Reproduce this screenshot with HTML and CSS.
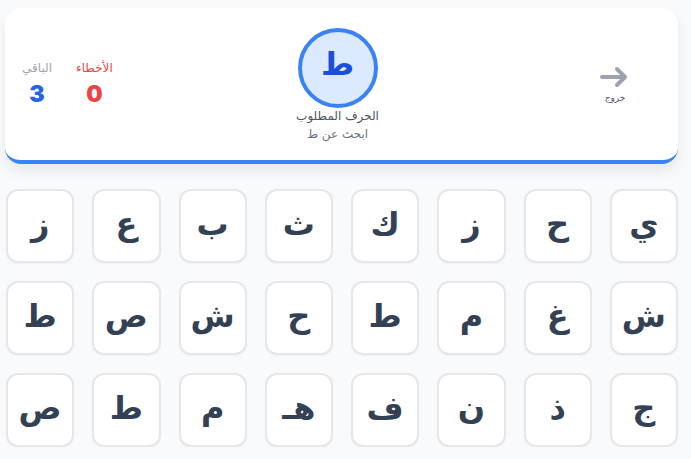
FILE: index.html
```html
<!DOCTYPE html>
<html lang="ar" dir="rtl">
<head>
<meta charset="utf-8">
<title>ابحث عن الحرف</title>
<link rel="stylesheet" href="styles.css">
</head>
<body>
<div class="page">
  <header class="card">
    <button class="exit" type="button">
      <svg class="exit-icon" width="30" height="22" viewBox="0 0 30 22" aria-hidden="true">
        <path d="M2 11 H25 M17 3 L25 11 L17 19" fill="none" stroke="#9ca3af" stroke-width="4" stroke-linecap="round" stroke-linejoin="round"/>
      </svg>
      <span class="exit-label">خروج</span>
    </button>
    <div class="target">
      <div class="target-circle">ط</div>
      <div class="target-title">الحرف المطلوب</div>
      <div class="target-sub">ابحث عن ط</div>
    </div>
    <div class="stats">
      <div class="stat">
        <span class="stat-label errors">الأخطاء</span>
        <span class="stat-value errors-v">0</span>
      </div>
      <div class="stat">
        <span class="stat-label">الباقي</span>
        <span class="stat-value remain-v">3</span>
      </div>
    </div>
  </header>

  <main class="grid">
    <button class="tile">ي</button>
    <button class="tile">ح</button>
    <button class="tile">ز</button>
    <button class="tile">ك</button>
    <button class="tile">ث</button>
    <button class="tile">ب</button>
    <button class="tile">ع</button>
    <button class="tile">ز</button>

    <button class="tile">ش</button>
    <button class="tile">غ</button>
    <button class="tile">م</button>
    <button class="tile">ط</button>
    <button class="tile">ح</button>
    <button class="tile">ش</button>
    <button class="tile">ص</button>
    <button class="tile">ط</button>

    <button class="tile">ج</button>
    <button class="tile">ذ</button>
    <button class="tile">ن</button>
    <button class="tile">ف</button>
    <button class="tile">هـ</button>
    <button class="tile">م</button>
    <button class="tile">ط</button>
    <button class="tile">ص</button>
  </main>
</div>
</body>
</html>
```

FILE: styles.css
```css
* { box-sizing: border-box; }

html, body {
  margin: 0;
  background: #f8fafc;
  font-family: "DejaVu Sans", "Noto Sans", sans-serif;
  overflow: hidden;
}

.page {
  padding: 8px 13px 0 5px;
}

.card {
  display: grid;
  grid-template-columns: 1fr auto 1fr;
  align-items: center;
  height: 156px;
  background: #ffffff;
  border-radius: 16px;
  border-bottom: 4px solid #3b82f6;
  box-shadow: 0 8px 14px rgba(15, 23, 42, 0.07);
  padding: 0 17px 0 17px;
}

.exit {
  justify-self: start;
  display: flex;
  flex-direction: column;
  align-items: center;
  gap: 5px;
  background: none;
  border: 0;
  padding: 0 31px 0 0;
  margin: 0;
  font-family: inherit;
  cursor: pointer;
}

.exit-icon { display: block; }

.exit-label {
  font-size: 9px;
  color: #4b5563;
}

.target {
  display: flex;
  flex-direction: column;
  align-items: center;
  padding-bottom: 0;
  margin-right: 8px;
}

.target-circle {
  width: 80px;
  height: 80px;
  border-radius: 50%;
  background: #dbeafe;
  border: 4px solid #3b82f6;
  display: flex;
  align-items: center;
  justify-content: center;
  font-size: 32px;
  font-weight: bold;
  color: #1d4ed8;
  padding-bottom: 8px;
}

.target-title {
  margin-top: 1px;
  font-size: 12px;
  color: #4b5563;
}

.target-sub {
  margin-top: 4px;
  font-size: 12px;
  color: #6b7280;
}

.stats {
  justify-self: end;
  display: flex;
  gap: 24px;
  padding-bottom: 0;
}

.stat {
  display: flex;
  flex-direction: column;
  align-items: center;
  gap: 5px;
}

.stat-label {
  font-size: 12px;
  color: #9ca3af;
}

.stat-label.errors { color: #ef4444; }

.stat-value {
  font-family: "Inter", "DejaVu Sans", sans-serif;
  font-size: 23px;
  font-weight: 900;
  line-height: 28px;
}

.errors-v { color: #ef4444; }
.remain-v { color: #2563eb; }

.grid {
  margin-top: 25px;
  display: grid;
  grid-template-columns: repeat(8, 1fr);
  grid-auto-rows: 74px;
  column-gap: 18px;
  row-gap: 18px;
  padding-left: 1px;
}

.tile {
  background: #ffffff;
  border: 2px solid #e5e7eb;
  border-radius: 12px;
  box-shadow: 0 1px 2px rgba(15, 23, 42, 0.04);
  font-family: "DejaVu Sans", sans-serif;
  font-size: 32px;
  font-weight: bold;
  color: #334155;
  display: flex;
  align-items: center;
  justify-content: center;
  padding: 0 0 4px 0;
  cursor: pointer;
}
```
